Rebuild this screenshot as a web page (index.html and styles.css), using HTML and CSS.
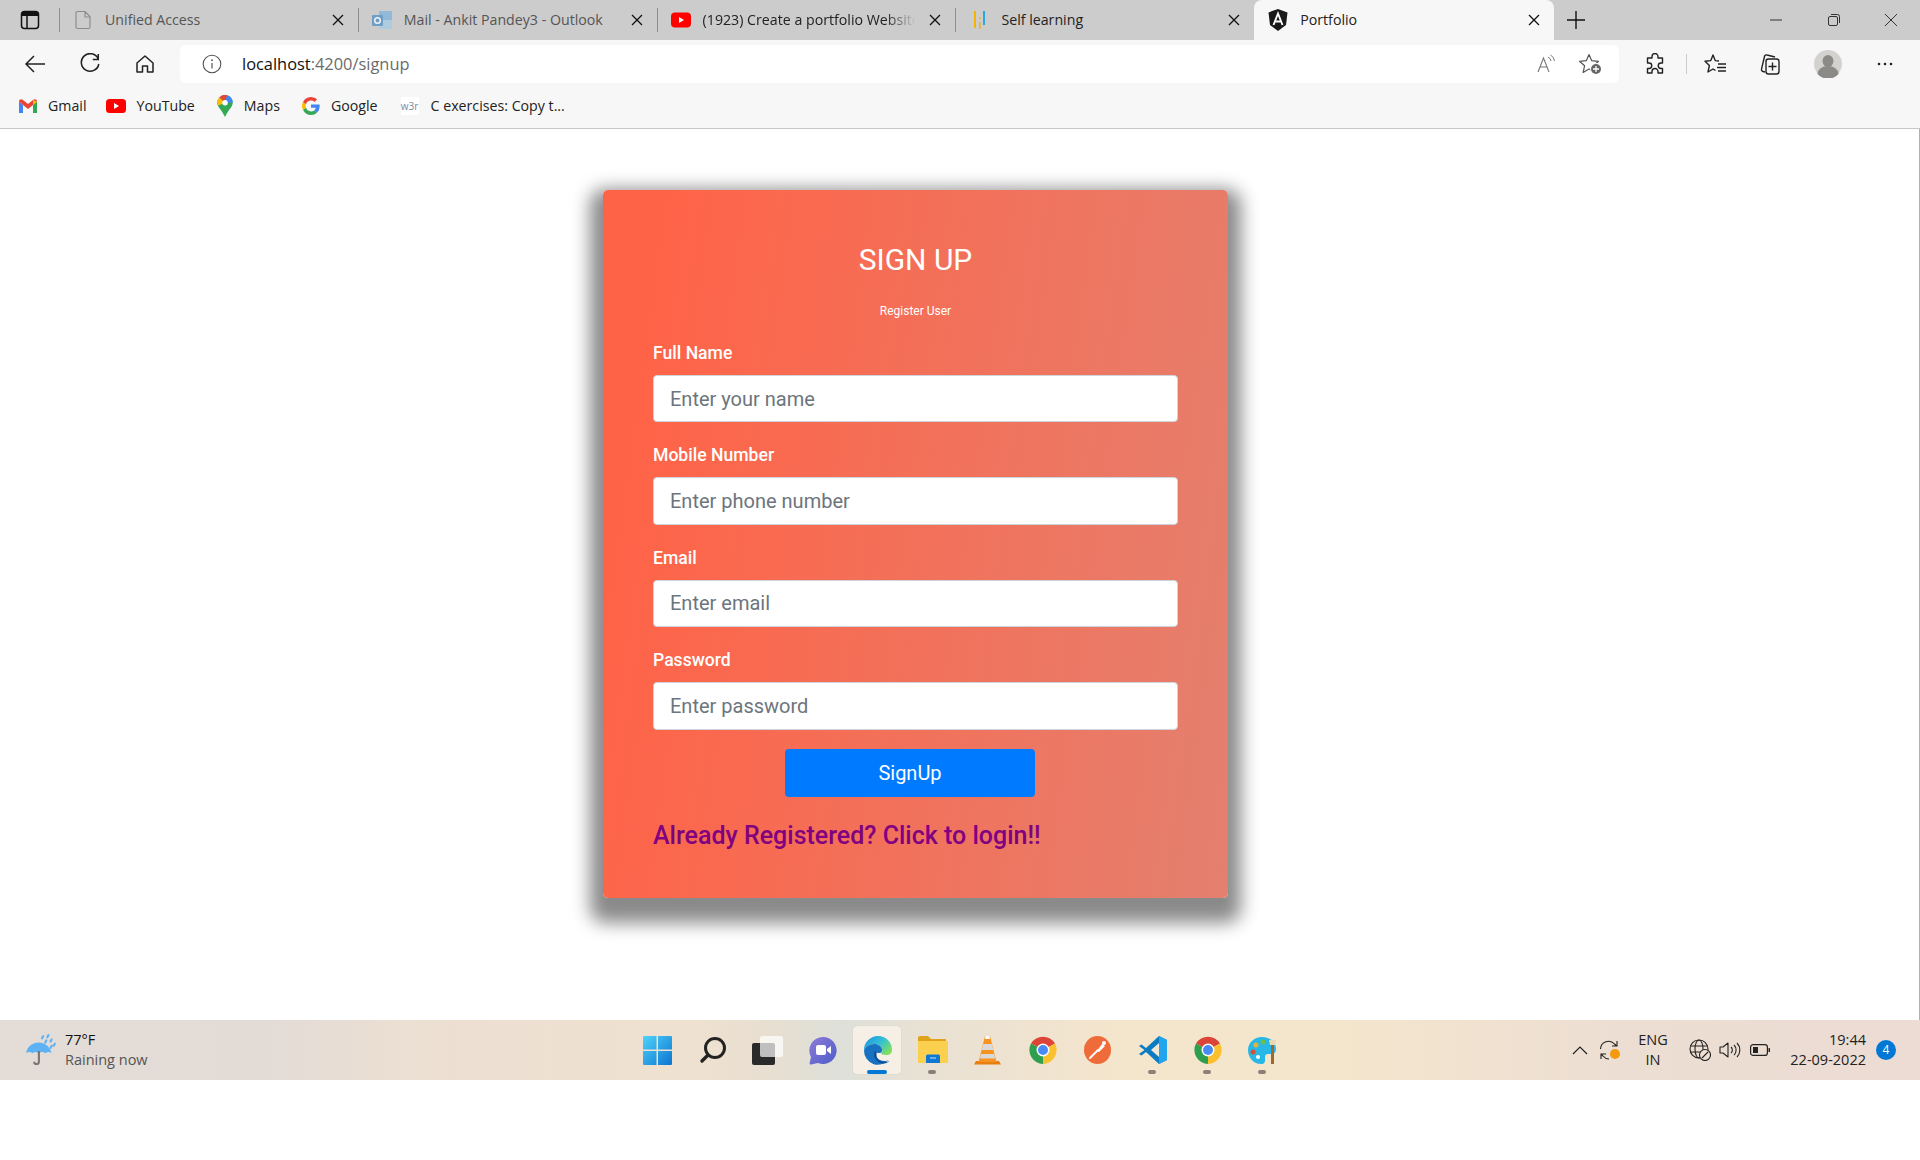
FILE: index.html
```html
<!DOCTYPE html>
<html>
<head>
  <meta charset="utf-8">
  <title>Portfolio</title>
  <link rel="stylesheet" href="styles.css">
</head>
<body>
  <!-- tabs -->
  <div class="tabbar">
    <div class="tab-menu">
      <svg width="20" height="20" viewBox="0 0 20 20"><rect x="1.5" y="1.5" width="17" height="17" rx="3" fill="none" stroke="#111" stroke-width="1.5"/><path d="M2 2h16v4H2z" fill="#111"/><path d="M7 6v12" stroke="#111" stroke-width="1.5"/></svg>
    </div>
    <div class="tab">
      <span class="tab-icon"><svg width="18" height="20" viewBox="0 0 18 20"><path d="M3 1.5h8l5 5V17a1.5 1.5 0 0 1-1.5 1.5h-11A1.5 1.5 0 0 1 2 17V3a1.5 1.5 0 0 1 1-1.5zM11 1.5V7h5" fill="none" stroke="#8e8e8e" stroke-width="1.2"/></svg></span>
      <span class="tab-title dim">Unified Access</span>
      <span class="tab-close"><svg width="12" height="12" viewBox="0 0 12 12"><path d="M1 1l10 10M11 1L1 11" stroke="#111" stroke-width="1.3"/></svg></span>
    </div>
    <div class="tab">
      <span class="tab-icon"><svg width="22" height="20" viewBox="0 0 22 20" opacity=".75"><path d="M8 1h13v18H8z" fill="#7fb4dc"/><path d="M8 10h13v9H8z" fill="#a6cbe6"/><rect x="1" y="5" width="11" height="11" rx="1" fill="#4f8fc4"/><circle cx="6.5" cy="10.5" r="2.8" fill="none" stroke="#fff" stroke-width="1.5"/></svg></span>
      <span class="tab-title dim">Mail - Ankit Pandey3 - Outlook</span>
      <span class="tab-close"><svg width="12" height="12" viewBox="0 0 12 12"><path d="M1 1l10 10M11 1L1 11" stroke="#111" stroke-width="1.3"/></svg></span>
    </div>
    <div class="tab">
      <span class="tab-icon"><svg width="20" height="16" viewBox="0 0 20 16"><rect width="20" height="15" y=".5" rx="4" fill="#f00"/><path d="M8 5l5 3-5 3z" fill="#fff"/></svg></span>
      <span class="tab-title fade">(1923) Create a portfolio Website</span>
      <span class="tab-close"><svg width="12" height="12" viewBox="0 0 12 12"><path d="M1 1l10 10M11 1L1 11" stroke="#111" stroke-width="1.3"/></svg></span>
    </div>
    <div class="tab">
      <span class="tab-icon"><svg width="14" height="20" viewBox="0 0 14 20"><path d="M2 1h2v17H2z" fill="#f4b400"/><path d="M11 1h2v14h-2z" fill="#29a9e1"/><path d="M7 7h1.5v2H7zM7 12h1.5v7H7z" fill="#f4b400"/></svg></span>
      <span class="tab-title">Self learning</span>
      <span class="tab-close"><svg width="12" height="12" viewBox="0 0 12 12"><path d="M1 1l10 10M11 1L1 11" stroke="#111" stroke-width="1.3"/></svg></span>
    </div>
    <div class="tab tab-active">
      <span class="tab-icon"><svg width="20" height="22" viewBox="0 0 20 22"><path d="M10 0l9.5 3.4-1.5 12.6L10 22 2 16 .5 3.4z" fill="#1a1a1a"/><path d="M5.5 16L10 4.5 14.5 16M7.2 12.5h5.6" fill="none" stroke="#fff" stroke-width="1.9"/></svg></span>
      <span class="tab-title">Portfolio</span>
      <span class="tab-close"><svg width="12" height="12" viewBox="0 0 12 12"><path d="M1 1l10 10M11 1L1 11" stroke="#111" stroke-width="1.3"/></svg></span>
    </div>
    <div class="tab-new">
      <svg width="18" height="18" viewBox="0 0 18 18"><path d="M9 0v18M0 9h18" stroke="#111" stroke-width="1.4"/></svg>
    </div>
    <div class="win-controls">
      <span class="win-btn"><svg width="12" height="12" viewBox="0 0 12 12"><path d="M0 6h12" stroke="#333"/></svg></span>
      <span class="win-btn"><svg width="14" height="14" viewBox="0 0 14 14"><rect x="1.5" y="3.5" width="9" height="9" rx="1.5" fill="none" stroke="#333"/><path d="M4 1.5h6.5a2 2 0 0 1 2 2V10" fill="none" stroke="#333"/></svg></span>
      <span class="win-btn"><svg width="14" height="14" viewBox="0 0 14 14"><path d="M1 1l12 12M13 1L1 13" stroke="#333"/></svg></span>
    </div>
  </div>

  <!-- address bar -->
  <div class="toolbar">
    <span class="nav-btn"><svg width="22" height="20" viewBox="0 0 22 20"><path d="M21 10H2M10 2l-8 8 8 8" fill="none" stroke="#222" stroke-width="1.5"/></svg></span>
    <span class="nav-btn"><svg width="22" height="22" viewBox="0 0 20 20"><path d="M17.5 5.5A8 8 0 1 0 18 10" fill="none" stroke="#222" stroke-width="1.4"/><path d="M17.5 1v5h-5" fill="none" stroke="#222" stroke-width="1.4"/></svg></span>
    <span class="nav-btn"><svg width="20" height="20" viewBox="0 0 20 20"><path d="M2 9l8-7 8 7v9h-5.5v-6h-5v6H2z" fill="none" stroke="#222" stroke-width="1.5" stroke-linejoin="round"/></svg></span>
    <div class="address">
      <span class="addr-info"><svg width="20" height="20" viewBox="0 0 20 20"><circle cx="10" cy="10" r="8.8" fill="none" stroke="#555" stroke-width="1.1"/><path d="M10 9v5.5" stroke="#555" stroke-width="1.2"/><circle cx="10" cy="6.2" r=".9" fill="#555"/></svg></span>
      <span class="url">localhost<span class="url-rest">:4200/signup</span></span>
      <span class="addr-tool addr-first"><svg width="20" height="20" viewBox="0 0 20 20"><path d="M2 18L7.5 4 13 18M4 13h7" fill="none" stroke="#777" stroke-width="1.1"/><path d="M12 3a5 5 0 0 1 3 4M14.5 1a8 8 0 0 1 4 6" fill="none" stroke="#777"/></svg></span>
      <span class="addr-tool"><svg width="24" height="22" viewBox="0 0 24 22"><path d="M10 1.5l2.7 6.2 6.8.6-5.1 4.5 1.5 6.7-5.9-3.5-5.9 3.5 1.5-6.7L.5 8.3l6.8-.6z" fill="none" stroke="#555" stroke-width="1.2" stroke-linejoin="round"/><circle cx="17" cy="16" r="6" fill="#fff"/><circle cx="17" cy="16" r="5" fill="#666"/><path d="M17 13v6M14 16h6" stroke="#fff" stroke-width="1.3"/></svg></span>
    </div>
    <span class="tool tool-ext"><svg width="22" height="22" viewBox="0 0 22 22"><path d="M8 3.5a3 3 0 0 1 6 0V5h4.5v5H17a2.7 2.7 0 0 0 0 5.500h1.500V20H14v-1.500a3 3 0 0 0-6 0V20H3.500v-4.500H5A2.700 2.700 0 0 0 5 10H3.500V5H8z" fill="none" stroke="#222" stroke-width="1.4" stroke-linejoin="round"/></svg></span>
    <span class="tool-sep"></span>
    <span class="tool"><svg width="24" height="22" viewBox="0 0 24 22"><path d="M15 8l-3.800-.4L9 2 6.800 7.600 1 8.300l4.400 4.200L4 19l5-3 2.500 1.500" fill="none" stroke="#222" stroke-width="1.4" stroke-linejoin="round"/><path d="M14 11h8M13 14.500h9M14 18h8" stroke="#222" stroke-width="1.4"/></svg></span>
    <span class="tool tool-coll"><svg width="22" height="24" viewBox="0 0 22 24"><path d="M6 20l-2-.5a2 2 0 0 1-1.500-2.400L5.500 4.500a2 2 0 0 1 2.500-1.500l8 2" fill="none" stroke="#222" stroke-width="1.4"/><rect x="7" y="7" width="13" height="15" rx="2.500" fill="#f7f7f7" stroke="#222" stroke-width="1.4"/><path d="M13.500 10.500v8M9.500 14.500h8" stroke="#222" stroke-width="1.4"/></svg></span>
    <span class="tool"><span class="avatar"><svg width="28" height="28" viewBox="0 0 28 28"><circle cx="14" cy="14" r="14" fill="#d3d2ce"/><ellipse cx="14" cy="11" rx="5.5" ry="6" fill="#8b8a87"/><path d="M3.500 24a10.500 8 0 0 1 21 0 14 14 0 0 1-21 0z" fill="#8b8a87"/></svg></span></span>
    <span class="tool tool-more"><svg width="16" height="4" viewBox="0 0 16 4"><circle cx="2" cy="2" r="1.3" fill="#222"/><circle cx="8" cy="2" r="1.3" fill="#222"/><circle cx="14" cy="2" r="1.3" fill="#222"/></svg></span>
  </div>

  <!-- bookmarks -->
  <div class="bookmarks">
    <a class="bm"><svg class="bm-icon" width="18" height="14" viewBox="0 0 18 14"><path d="M0 2.500V14h4V6z" fill="#4285f4"/><path d="M18 2.500V14h-4V6z" fill="#34a853"/><path d="M0 2.500C0 .5 2.300-.5 4 1l5 4 5-4c1.700-1.500 4-.5 4 1.500L14 6 9 10 4 6z" fill="#ea4335"/><path d="M14 1l4 1.500L14 6z" fill="#fbbc04"/></svg>Gmail</a>
    <a class="bm bm-yt"><svg class="bm-icon" width="20" height="14" viewBox="0 0 20 14"><rect width="20" height="14" rx="3.5" fill="#f00"/><path d="M8 4l5 3-5 3z" fill="#fff"/></svg>YouTube</a>
    <a class="bm bm-maps"><svg class="bm-icon" width="16" height="22" viewBox="0 0 14 20"><path d="M7 0a7 7 0 0 1 7 7c0 4-4 6-7 13C4 13 0 11 0 7a7 7 0 0 1 7-7z" fill="#34a853"/><path d="M2 2l5 5-6 2.500A7 7 0 0 1 2 2z" fill="#fbbc04"/><path d="M2 2A7 7 0 0 1 9 .3L7 7z" fill="#ea4335"/><path d="M9 .3A7 7 0 0 1 14 7L7 7z" fill="#4285f4"/><circle cx="7" cy="7" r="2.500" fill="#fff"/></svg>Maps</a>
    <a class="bm bm-google"><svg class="bm-icon" width="18" height="18" viewBox="0 0 16 16"><path d="M15.700 8.200c0-.6 0-1.100-.1-1.600H8v3h4.300a3.700 3.700 0 0 1-1.600 2.400l2.600 2a7.800 7.800 0 0 0 2.400-5.800z" fill="#4285f4"/><path d="M8 16a7.700 7.700 0 0 0 5.300-2l-2.600-2A4.800 4.800 0 0 1 3.500 9.500L.9 11.600A8 8 0 0 0 8 16z" fill="#34a853"/><path d="M3.500 9.500a4.800 4.800 0 0 1 0-3L.9 4.400a8 8 0 0 0 0 7.200z" fill="#fbbc04"/><path d="M8 3.200c1.200 0 2.300.4 3.100 1.200l2.300-2.300A8 8 0 0 0 .9 4.400l2.600 2.100A4.800 4.800 0 0 1 8 3.200z" fill="#ea4335"/></svg>Google</a>
    <a class="bm"><span class="w3r">w3r</span>C exercises: Copy t...</a>
  </div>

  <!-- page -->
  <div class="page">
    <form class="signup-card" onsubmit="return false;">
      <h2 class="signup-title">SIGN UP</h2>
      <p class="signup-sub">Register User</p>

      <div class="field">
        <label for="name">Full Name</label>
        <input type="text" id="name" placeholder="Enter your name">
      </div>
      <div class="field">
        <label for="phone">Mobile Number</label>
        <input type="text" id="phone" placeholder="Enter phone number">
      </div>
      <div class="field">
        <label for="email">Email</label>
        <input type="text" id="email" placeholder="Enter email">
      </div>
      <div class="field">
        <label for="pass">Password</label>
        <input type="password" id="pass" placeholder="Enter password">
      </div>

      <button type="submit" class="signup-btn">SignUp</button>
      <a class="login-link">Already Registered? Click to login!!</a>
    </form>
  </div>

  <!-- taskbar -->
  <div class="taskbar">
    <div class="weather">
      <svg class="weather-icon" width="34" height="34" viewBox="0 0 32 32"><path d="M2 19C3 12 9 9 14 9s10 3 12 10c-2-1.500-4-1.500-6 0-2-1.500-4-1.500-6 0-2-1.500-4-1.500-6 0-2-1.500-4-1.500-6 0z" fill="#5cb2f5"/><path d="M14 17v10a2.200 2.200 0 0 1-4.400 0" fill="none" stroke="#777" stroke-width="2"/><path d="M17 5l1-2M22 4l1-2M20 9l1-2M25 8l1-2M28 12l1-2M25 14l1-2" stroke="#5cb2f5" stroke-width="2" stroke-linecap="round"/></svg>
      <div class="weather-text">
        <span class="temp">77°F</span>
        <span class="cond">Raining now</span>
      </div>
    </div>

    <div class="task-icons">
      <span class="task-item"><svg width="29" height="29" viewBox="0 0 29 29"><defs><linearGradient id="win" x1="0" y1="0" x2="1" y2="1"><stop offset="0" stop-color="#4fd3fb"/><stop offset="1" stop-color="#0a74d0"/></linearGradient></defs><path d="M0 1a1 1 0 0 1 1-1h12.500v13.500H0zM15 0h13a1 1 0 0 1 1 1v12.500H15zM0 15h13.500v14H1a1 1 0 0 1-1-1zM15 15h14v13a1 1 0 0 1-1 1H15z" fill="url(#win)"/></svg></span>
      <span class="task-item"><svg width="28" height="28" viewBox="0 0 28 28"><circle cx="16" cy="12" r="9.500" fill="none" stroke="#222" stroke-width="3"/><path d="M9 19l-6 6" stroke="#222" stroke-width="3.400" stroke-linecap="round"/></svg></span>
      <span class="task-item"><svg width="31" height="29" viewBox="0 0 31 29"><rect y="7" width="23" height="22" rx="2" fill="#2a2a2a"/><rect x="8" width="23" height="21" rx="2" fill="#fff" fill-opacity=".7"/></svg></span>
      <span class="task-item"><svg width="29" height="29" viewBox="0 0 29 29"><defs><linearGradient id="chat" x1="0" y1="0" x2="1" y2="1"><stop offset="0" stop-color="#8e7bd8"/><stop offset="1" stop-color="#4c5cc8"/></linearGradient></defs><path d="M15 1a13.500 13.500 0 1 1-5 26l-7 1.500c-1 .2-1.500-.5-1.400-1.500L3 21A13.500 13.500 0 0 1 15 1z" fill="url(#chat)"/><rect x="8" y="9" width="10" height="10" rx="2" fill="#fff"/><path d="M19 13l4-3v8l-4-3z" fill="#fff"/></svg></span>
      <span class="task-item task-active"><svg width="30" height="30" viewBox="0 0 30 30"><defs><linearGradient id="edge" x1="0" y1="0" x2="1" y2=".7"><stop offset="0" stop-color="#1a8fdc"/><stop offset=".55" stop-color="#33bfd8"/><stop offset="1" stop-color="#7fe05c"/></linearGradient></defs><path d="M15 1a14 14 0 0 1 14 14c0 3-2 5-6 5-3 0-5-1-5-2 1-1 2-2 1-4-1-3-4-5-8-5-5 0-9 3-10 7A14 14 0 0 1 15 1z" fill="url(#edge)"/><path d="M1 16c1-4 5-7 10-7 4 0 7 2 8 5 .6 2-.5 3-1.500 4-3 0-5-1-5 1 0 4 4 7 9 7 2 0 3-.5 4-1A14 14 0 0 1 1 16z" fill="#1772c2"/><path d="M12 16c-2 3-1 7 2 10 2 2 5 2.500 7 2.500 2 0 4-1 5.500-2.500-1 .5-2 1-4 1-5 0-9-3-9-7 0-1.500 .5-3-1.500-4z" fill="#0d4f97"/></svg></span>
      <span class="task-item task-open"><svg width="30" height="28" viewBox="0 0 30 28"><path d="M0 2a2 2 0 0 1 2-2h8l3 3h15v5H0z" fill="#dfa31a"/><path d="M0 5h30v21a1 1 0 0 1-1 1H1a1 1 0 0 1-1-1z" fill="#fcd04f"/><path d="M8 20a1.500 1.500 0 0 1 1.500-1.500h11A1.500 1.500 0 0 1 22 20v7H8z" fill="#0f78d4"/><path d="M12 22h6" stroke="#bfe3ff"/></svg></span>
      <span class="task-item"><svg width="27" height="30" viewBox="0 0 27 30"><path d="M2 26h23l2 3.500H0z" fill="#e67e11"/><path d="M11 1h5l6.500 26h-18z" fill="#f7931e"/><path d="M9.200 9h8.600l1.500 6H7.700z" fill="#d9d9d9"/><path d="M6.800 19h13.400l1 4.500H5.800z" fill="#d9d9d9"/><path d="M11.500 1h4l.5 3h-5z" fill="#fff"/></svg></span>
      <span class="task-item"><svg width="28" height="28" viewBox="0 0 28 28"><path d="M14 14L2 7.500A14 14 0 0 1 26 7.500z" fill="#db4437"/><path d="M14 14L26 7.500A14 14 0 0 1 14 28z" fill="#fbc02d"/><path d="M14 14V28A14 14 0 0 1 2 7.500z" fill="#2e9e4f"/><circle cx="14" cy="14" r="6.500" fill="#fff"/><circle cx="14" cy="14" r="5" fill="#4a8af4"/></svg></span>
      <span class="task-item"><svg width="27" height="28" viewBox="0 0 27 28"><ellipse cx="13.500" cy="14" rx="13.500" ry="14" fill="#ef6c3a"/><path d="M6 22l8-8" stroke="#fff" stroke-width="2" stroke-linecap="round"/><path d="M13 15l5-7 3 2-6 6z" fill="#fff"/><circle cx="20" cy="7" r="2" fill="#fff"/></svg></span>
      <span class="task-item task-open"><svg width="30" height="30" viewBox="0 0 30 30"><path d="M21 1l8 4v20l-8 4L8 17l-4.500 3.500L1 19l5.500-4L1 11l2.500-1.500L8 13z" fill="#0a7cc4"/><path d="M21 1l8 4v20l-8 4z" fill="#23a5ee"/><path d="M21 8l-8 7 8 7z" fill="#f2e6d4"/></svg></span>
      <span class="task-item task-open"><svg width="28" height="28" viewBox="0 0 28 28"><path d="M14 14L2 7.500A14 14 0 0 1 26 7.500z" fill="#db4437"/><path d="M14 14L26 7.500A14 14 0 0 1 14 28z" fill="#fbc02d"/><path d="M14 14V28A14 14 0 0 1 2 7.500z" fill="#2e9e4f"/><circle cx="14" cy="14" r="6.500" fill="#fff"/><circle cx="14" cy="14" r="5" fill="#4a8af4"/></svg></span>
      <span class="task-item task-open"><svg width="29" height="29" viewBox="0 0 29 29"><path d="M14 1c8 0 14 5 14 12 0 6-5 5-8 5-2 0-3 1-3 3 0 3 1 7-4 7C6 28 0 22 0 14 0 7 6 1 14 1z" fill="#27b8e8"/><circle cx="8" cy="9" r="2.500" fill="#e8b23a"/><circle cx="15" cy="6" r="2.500" fill="#6cc04a"/><circle cx="5" cy="16" r="2.500" fill="#d8502e"/><circle cx="10" cy="21" r="2" fill="#fff"/><path d="M23 8h3v20h-3z" fill="#a0692c"/><path d="M21 4h7l-1 5h-5z" fill="#e8d9b5"/></svg></span>
    </div>

    <div class="tray">
      <span class="tray-icon"><svg width="16" height="9" viewBox="0 0 16 9"><path d="M1 8l7-7 7 7" fill="none" stroke="#222" stroke-width="1.2"/></svg></span>
      <span class="tray-icon"><svg width="22" height="22" viewBox="0 0 22 22"><path d="M1.500 10a8 8 0 0 1 14-5l2 2M18 2v5h-5M2 15l2 2a8 8 0 0 0 6 3M2 20v-5h5" fill="none" stroke="#222" stroke-width="1.1"/><circle cx="16" cy="15" r="5" fill="#f59a0c"/></svg></span>
      <span class="tray-lang">ENG<br>IN</span>
      <span class="tray-icon tray-gap"><svg width="22" height="22" viewBox="0 0 22 22"><circle cx="10" cy="10" r="9" fill="none" stroke="#222" stroke-width="1.1"/><ellipse cx="10" cy="10" rx="4" ry="9" fill="none" stroke="#222" stroke-width="1.1"/><path d="M1.500 7h17M1.500 13h17" stroke="#222" stroke-width="1.1"/><circle cx="16" cy="16" r="5.500" fill="#efe0d4" stroke="#222" stroke-width="1.1"/><path d="M13 19l6-6" stroke="#222" stroke-width="1.1"/></svg></span>
      <span class="tray-icon"><svg width="22" height="18" viewBox="0 0 22 18"><path d="M1 6h3l5-4v14l-5-4H1z" fill="none" stroke="#222" stroke-width="1.1" stroke-linejoin="round"/><path d="M12 6a4 4 0 0 1 0 6M15 4a7 7 0 0 1 0 10M18 2a10 10 0 0 1 0 14" fill="none" stroke="#222" stroke-width="1.1"/></svg></span>
      <span class="tray-icon"><svg width="20" height="12" viewBox="0 0 20 12"><rect x=".6" y=".6" width="16.8" height="10.8" rx="2.500" fill="none" stroke="#222" stroke-width="1.2"/><rect x="3" y="3" width="5" height="6" fill="#222"/><path d="M18.500 4h1a.5.5 0 0 1 .5.5v3a.5.5 0 0 1-.5.5h-1z" fill="#222"/></svg></span>
      <span class="clock">19:44<br>22-09-2022</span>
      <span class="notif">4</span>
    </div>
  </div>
</body>
</html>
```

FILE: styles.css
```css
* {
  box-sizing: border-box;
}

body {
  margin: 0;
  padding: 0;
  background-color: #fff;
  font-family: "Open Sans", "Noto Sans", sans-serif;
  color: #222;
}

/* tabs */
.tabbar {
  display: flex;
  align-items: stretch;
  height: 40px;
  background-color: #ccc;
}

.tab-menu {
  display: flex;
  align-items: center;
  justify-content: center;
  width: 59px;
}

.tab {
  position: relative;
  display: flex;
  align-items: center;
  width: 298.8px;
  padding: 0 14px 0 13px;
  font-size: 14.2px;
}

.tab::before {
  content: "";
  position: absolute;
  left: 0;
  top: 8px;
  bottom: 8px;
  width: 1px;
  background-color: #8e8e8e;
}

.tab-active {
  width: 300px;
  background-color: #f7f7f7;
  border-radius: 8px 8px 0 0;
}

.tab-active::before {
  display: none;
}

.tab-icon {
  display: flex;
  justify-content: center;
  flex: 0 0 22px;
  margin-right: 11px;
}

.tab-title {
  flex: 1;
  padding-bottom: 2px;
  overflow: hidden;
  white-space: nowrap;
}

.dim {
  color: #555;
}

.fade {
  -webkit-mask-image: linear-gradient(to right, #000 84%, transparent 98%);
  mask-image: linear-gradient(to right, #000 84%, transparent 98%);
}

.tab-close {
  display: flex;
  flex: 0 0 12px;
  margin-left: 9px;
}

.tab-new {
  display: flex;
  align-items: center;
  margin-left: 13px;
}

.win-controls {
  display: flex;
  margin-left: auto;
}

.win-btn {
  display: flex;
  align-items: center;
  justify-content: center;
  width: 57.6px;
}

/* address bar */
.toolbar {
  display: flex;
  align-items: center;
  height: 46px;
  padding: 5px 0 3px 7px;
  background-color: #f7f7f7;
}

.nav-btn {
  display: flex;
  align-items: center;
  justify-content: center;
  width: 55px;
}

.address {
  display: flex;
  align-items: center;
  width: 1439px;
  height: 38px;
  margin-left: 8px;
  padding: 0 6px 0 22px;
  background-color: #fff;
  border-radius: 6px;
}

.addr-info {
  display: flex;
  margin-right: 20px;
}

.url {
  padding-bottom: 2px;
  font-size: 16.4px;
  color: #111;
}

.url-rest {
  color: #6b6b6b;
}

.addr-tool {
  display: flex;
  justify-content: center;
  width: 45px;
}

.addr-first {
  margin-left: auto;
}

.tool {
  display: flex;
  align-items: center;
  justify-content: center;
  width: 56px;
}

.tool-ext {
  margin-left: 8px;
}

.tool-sep {
  width: 1px;
  height: 20px;
  margin: 0 1px 0 3px;
  background-color: #ccc;
}

.tool-coll {
  padding-right: 4px;
}

.tool-more {
  padding-left: 2px;
}

.avatar {
  display: flex;
}

/* bookmarks */
.bookmarks {
  display: flex;
  align-items: center;
  gap: 20px;
  height: 43px;
  padding: 0 0 3px 19px;
  background-color: #f7f7f7;
  border-bottom: 1px solid #c6c6c6;
  font-size: 14.2px;
}

.bm {
  display: flex;
  align-items: center;
  color: #222;
}

.bm-icon {
  margin-right: 11px;
}

.bm-yt {
  margin-left: -1px;
}

.bm-maps {
  margin-left: 2px;
}

.bm-google {
  margin-left: 2px;
}

.w3r {
  width: 18px;
  margin: 0 12px 0 3px;
  background-color: #fff;
  color: #7a8aa0;
  font-size: 10px;
  line-height: 18px;
  text-align: center;
}

/* page */
.page {
  height: 891px;
  padding: 61px 0 0 603px;
  border-right: 1px solid #b0b0b0;
}

.signup-card {
  width: 625px;
  height: 708px;
  padding: 53px 50px 0;
  border-radius: 5px;
  background: linear-gradient(98deg, #ff6347 8%, #e4806f 100%);
  box-shadow: 0 12px 18px 13px #8a8a8a;
  font-family: Roboto, sans-serif;
  color: #fff;
}

.signup-title {
  margin: 0;
  font-size: 30px;
  font-weight: 400;
  line-height: 34px;
  text-align: center;
}

.signup-sub {
  margin: 25px 0 0;
  font-size: 12px;
  font-weight: 400;
  line-height: 19px;
  text-align: center;
}

.field {
  margin-top: 20px;
}

.field label {
  display: block;
  margin-bottom: 10px;
  font-size: 17.6px;
  font-weight: 500;
  line-height: 24px;
}

.field + .field {
  margin-top: 21px;
}

.field input {
  display: block;
  width: 100%;
  height: 47.4px;
  padding: 0 16px;
  border: 1px solid #ced4da;
  border-radius: 4px;
  background-color: #fff;
  font-family: Roboto, sans-serif;
  font-size: 20px;
}

.field input::placeholder {
  color: #6c757d;
  opacity: 1;
}

.signup-btn {
  display: block;
  width: 250px;
  height: 48px;
  margin: 19px 0 0 132px;
  border: none;
  border-radius: 4px;
  background-color: #007bff;
  color: #fff;
  font-family: Roboto, sans-serif;
  font-size: 20px;
}

.login-link {
  display: block;
  margin-top: 24px;
  color: #800080;
  font-size: 25px;
  font-weight: 500;
  line-height: 30px;
}

/* taskbar */
.taskbar {
  display: grid;
  grid-template-columns: 1fr auto 1fr;
  align-items: center;
  height: 60px;
  background: linear-gradient(to right, #e4dcd6 0%, #e3dbd6 14%, #ecdfd3 21%, #efe1d0 36%, #e8dfd1 40%, #dde0d9 44%, #e9e1d4 48%, #f4e5cd 58%, #f4e5cd 70%, #ecded3 85%, #ecdcd4 100%);
}

.weather {
  display: flex;
  align-items: center;
  padding-left: 24px;
}

.weather-icon {
  margin-right: 7px;
}

.weather-text {
  display: flex;
  flex-direction: column;
  font-size: 14.5px;
  line-height: 20px;
}

.temp {
  color: #111;
}

.cond {
  color: #555;
}

.task-icons {
  display: flex;
}

.task-item {
  position: relative;
  display: flex;
  align-items: center;
  justify-content: center;
  width: 55px;
  height: 60px;
}

.task-item svg {
  position: relative;
}

.task-active::before {
  content: "";
  position: absolute;
  left: 3px;
  top: 6px;
  width: 48px;
  height: 48px;
  border-radius: 4px;
  background-color: #f5efe6;
  box-shadow: 0 0 1px #bbb;
}

.task-active::after {
  content: "";
  position: absolute;
  left: 17px;
  top: 50px;
  width: 20px;
  height: 4px;
  border-radius: 2px;
  background-color: #0078d4;
}

.task-open::after {
  content: "";
  position: absolute;
  left: 23px;
  top: 50px;
  width: 8px;
  height: 4px;
  border-radius: 2px;
  background-color: #8a8078;
}

.tray {
  display: flex;
  align-items: center;
  justify-content: flex-end;
  padding-right: 24px;
  font-size: 14.5px;
  line-height: 20px;
  color: #222;
}

.tray-icon {
  display: flex;
  align-items: center;
  justify-content: center;
  width: 30px;
}

.tray-gap {
  margin-left: 4px;
}

.tray-lang {
  width: 56px;
  text-align: center;
}

.clock {
  width: 91px;
  text-align: right;
}

.notif {
  width: 20px;
  height: 20px;
  margin-left: 10px;
  border-radius: 50%;
  background-color: #0078d4;
  color: #fff;
  font-size: 12px;
  text-align: center;
}
```
